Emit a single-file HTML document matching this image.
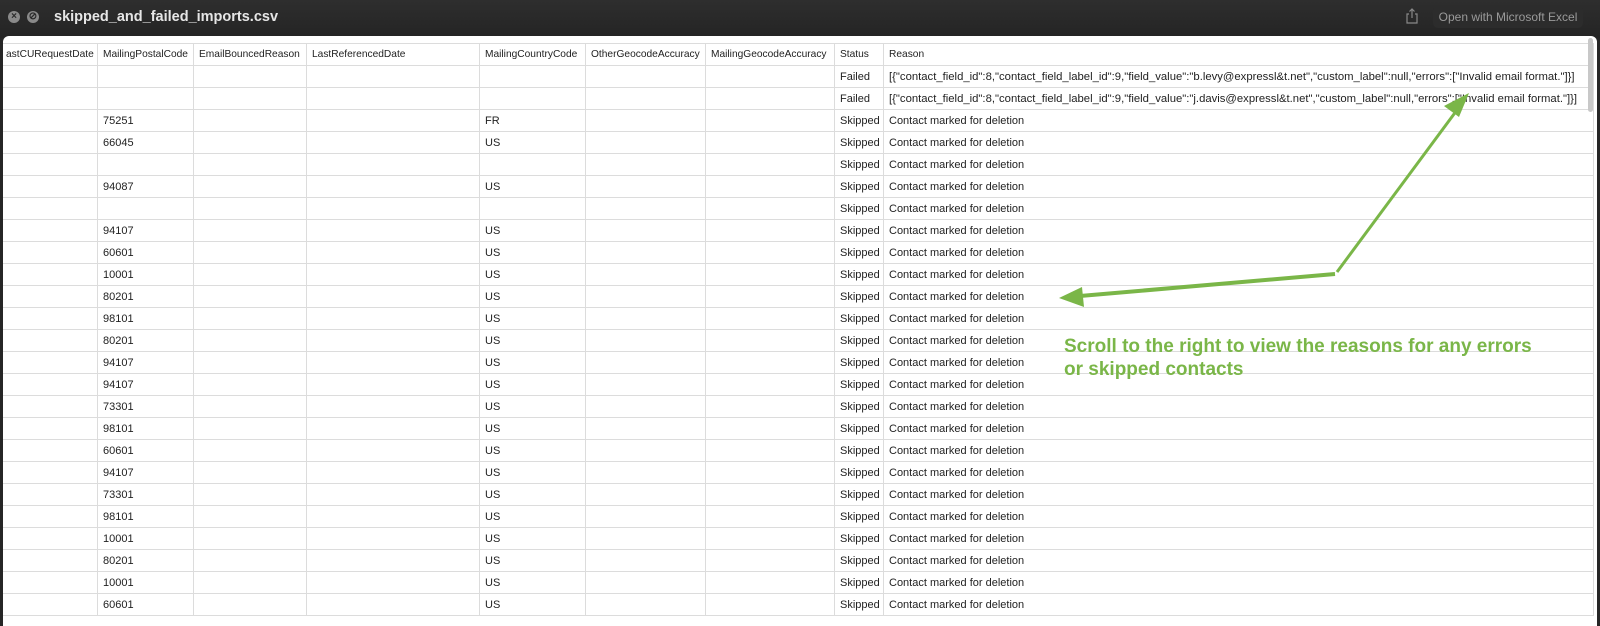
<!DOCTYPE html>
<html><head><style>
body{margin:0;width:1600px;height:613px;overflow:hidden;background:#262626;font-family:"Liberation Sans",sans-serif;position:relative}
.tb{position:absolute;left:0;top:0;width:1600px;height:38px;background:linear-gradient(#2e2e2e,#242424)}
.title{position:absolute;left:54px;top:9px;color:#e6e6e6;font-size:14.5px;font-weight:bold}
.c{position:absolute;top:11px;width:12px;height:12px;border-radius:50%;background:#8a8a8a;color:#2a2a2a;font-size:10px;line-height:12px;text-align:center;font-weight:bold}
.btn{position:absolute;left:1433px;top:6px;width:150px;height:22px;border-radius:5px;background:#2c2c2c;color:#9a9a9a;font-size:12px;line-height:22px;text-align:center}
.win{position:absolute;left:3px;top:36px;width:1594px;height:590px;background:#fff;border-radius:6px 6px 0 0;overflow:hidden}
table{position:absolute;left:-3px;top:7px;border-collapse:collapse;table-layout:fixed;font-size:11px;color:#222}
td{border:1px solid #dcdcdc;height:21px;padding:0 0 0 5px;white-space:nowrap;overflow:hidden}
tr.h td{font-size:10.2px}
.j{font-size:11.3px}
.sb{position:absolute;left:1588px;top:38px;width:5px;height:74px;background:#c8c8c8;border-radius:3px}
.note{position:absolute;left:1064px;top:335px;color:#7ab648;font-size:19px;font-weight:bold;line-height:23px}
</style></head><body>
<div class="tb"><div class="c" style="left:8px">×</div><div class="c" style="left:27px">⊘</div><div class="title">skipped_and_failed_imports.csv</div>
<svg style="position:absolute;left:1405px;top:8px" width="14" height="16" viewBox="0 0 14 16"><path d="M4 6H2v9h10V6h-2M7 1v9M4.5 3.5L7 1l2.5 2.5" fill="none" stroke="#888" stroke-width="1.2"/></svg>
<div class="btn">Open with Microsoft Excel</div></div>
<div class="win">
<table>
<colgroup><col style="width:97px"><col style="width:96px"><col style="width:113px"><col style="width:173px"><col style="width:106px"><col style="width:120px"><col style="width:129px"><col style="width:49px"><col style="width:710px"></colgroup>
<tr class="h"><td>astCURequestDate</td><td>MailingPostalCode</td><td>EmailBouncedReason</td><td>LastReferencedDate</td><td>MailingCountryCode</td><td>OtherGeocodeAccuracy</td><td>MailingGeocodeAccuracy</td><td>Status</td><td>Reason</td></tr>
<tr><td></td><td></td><td></td><td></td><td></td><td></td><td></td><td>Failed</td><td class="j">[{"contact_field_id":8,"contact_field_label_id":9,"field_value":"b.levy@expressl&amp;t.net","custom_label":null,"errors":["Invalid email format."]}]</td></tr>
<tr><td></td><td></td><td></td><td></td><td></td><td></td><td></td><td>Failed</td><td class="j">[{"contact_field_id":8,"contact_field_label_id":9,"field_value":"j.davis@expressl&amp;t.net","custom_label":null,"errors":["Invalid email format."]}]</td></tr>
<tr><td></td><td>75251</td><td></td><td></td><td>FR</td><td></td><td></td><td>Skipped</td><td>Contact marked for deletion</td></tr>
<tr><td></td><td>66045</td><td></td><td></td><td>US</td><td></td><td></td><td>Skipped</td><td>Contact marked for deletion</td></tr>
<tr><td></td><td></td><td></td><td></td><td></td><td></td><td></td><td>Skipped</td><td>Contact marked for deletion</td></tr>
<tr><td></td><td>94087</td><td></td><td></td><td>US</td><td></td><td></td><td>Skipped</td><td>Contact marked for deletion</td></tr>
<tr><td></td><td></td><td></td><td></td><td></td><td></td><td></td><td>Skipped</td><td>Contact marked for deletion</td></tr>
<tr><td></td><td>94107</td><td></td><td></td><td>US</td><td></td><td></td><td>Skipped</td><td>Contact marked for deletion</td></tr>
<tr><td></td><td>60601</td><td></td><td></td><td>US</td><td></td><td></td><td>Skipped</td><td>Contact marked for deletion</td></tr>
<tr><td></td><td>10001</td><td></td><td></td><td>US</td><td></td><td></td><td>Skipped</td><td>Contact marked for deletion</td></tr>
<tr><td></td><td>80201</td><td></td><td></td><td>US</td><td></td><td></td><td>Skipped</td><td>Contact marked for deletion</td></tr>
<tr><td></td><td>98101</td><td></td><td></td><td>US</td><td></td><td></td><td>Skipped</td><td>Contact marked for deletion</td></tr>
<tr><td></td><td>80201</td><td></td><td></td><td>US</td><td></td><td></td><td>Skipped</td><td>Contact marked for deletion</td></tr>
<tr><td></td><td>94107</td><td></td><td></td><td>US</td><td></td><td></td><td>Skipped</td><td>Contact marked for deletion</td></tr>
<tr><td></td><td>94107</td><td></td><td></td><td>US</td><td></td><td></td><td>Skipped</td><td>Contact marked for deletion</td></tr>
<tr><td></td><td>73301</td><td></td><td></td><td>US</td><td></td><td></td><td>Skipped</td><td>Contact marked for deletion</td></tr>
<tr><td></td><td>98101</td><td></td><td></td><td>US</td><td></td><td></td><td>Skipped</td><td>Contact marked for deletion</td></tr>
<tr><td></td><td>60601</td><td></td><td></td><td>US</td><td></td><td></td><td>Skipped</td><td>Contact marked for deletion</td></tr>
<tr><td></td><td>94107</td><td></td><td></td><td>US</td><td></td><td></td><td>Skipped</td><td>Contact marked for deletion</td></tr>
<tr><td></td><td>73301</td><td></td><td></td><td>US</td><td></td><td></td><td>Skipped</td><td>Contact marked for deletion</td></tr>
<tr><td></td><td>98101</td><td></td><td></td><td>US</td><td></td><td></td><td>Skipped</td><td>Contact marked for deletion</td></tr>
<tr><td></td><td>10001</td><td></td><td></td><td>US</td><td></td><td></td><td>Skipped</td><td>Contact marked for deletion</td></tr>
<tr><td></td><td>80201</td><td></td><td></td><td>US</td><td></td><td></td><td>Skipped</td><td>Contact marked for deletion</td></tr>
<tr><td></td><td>10001</td><td></td><td></td><td>US</td><td></td><td></td><td>Skipped</td><td>Contact marked for deletion</td></tr>
<tr><td></td><td>60601</td><td></td><td></td><td>US</td><td></td><td></td><td>Skipped</td><td>Contact marked for deletion</td></tr>
</table>
</div>
<div class="sb"></div>
<svg style="position:absolute;left:0;top:0" width="1600" height="613">
<path d="M1337 272 L1457 110" stroke="#7ab648" stroke-width="3" fill="none"/>
<path d="M1469 93 L1444 106 L1459 117 Z" fill="#7ab648"/>
<path d="M1335 274 L1080 296" stroke="#7ab648" stroke-width="4" fill="none"/>
<path d="M1059 298 L1082 287 L1084 307 Z" fill="#7ab648"/>
</svg>
<div class="note">Scroll to the right to view the reasons for any errors<br>or skipped contacts</div>
</body></html>
